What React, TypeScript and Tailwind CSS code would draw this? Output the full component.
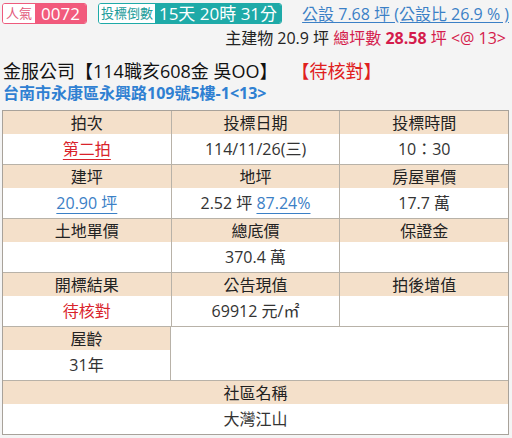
import React from "react";

const font = {
  fontFamily: '"Open Sans", "Noto Sans CJK TC", sans-serif',
};

const Head = ({ children }: { children?: React.ReactNode }) => (
  <div className="h-[23px] bg-[#f4e0ca] flex items-center justify-center text-[16px] text-[#222]">
    {children}
  </div>
);

const Val = ({ children }: { children?: React.ReactNode }) => (
  <div className="h-[30px] bg-white flex items-center justify-center text-[16px] text-[#333]">
    {children}
  </div>
);

const Cell = ({ head, value, last }: { head: string; value?: React.ReactNode; last?: boolean }) => (
  <div className={last ? "flex-1" : "flex-1 border-r border-[#b8b2a8]"}>
    <Head>{head}</Head>
    <Val>{value}</Val>
  </div>
);

export default function App() {
  return (
    <div className="w-[512px] h-[438px] bg-[#f4f4f4] overflow-hidden" style={font}>
      <div className="flex items-center pl-[2px] pr-[3px] pt-[3px] h-[24px]">
        <div className="flex h-[21px] rounded-[3px] overflow-hidden border border-[#ee5a7c] leading-none">
          <span className="bg-white text-[#e2587a] text-[13px] px-[3px] flex items-center">人氣</span>
          <span className="bg-[#f25a7c] text-white text-[17px] px-[6px] flex items-center">0072</span>
        </div>
        <div className="ml-[11px] flex h-[21px] rounded-[3px] overflow-hidden border border-[#1eaaa8] leading-none">
          <span className="bg-white text-[#1b9c9a] text-[13px] px-[2px] flex items-center">投標倒數</span>
          <span className="bg-[#1eaaa8] text-white text-[17px] px-[4px] flex items-center">15天 20時 31分</span>
        </div>
        <a className="ml-auto text-[16px] text-[#3b80c6] underline underline-offset-2">公設 7.68 坪 (公設比 26.9 % )</a>
      </div>
      <div className="flex justify-end pr-[6px] mt-[3px] h-[22px] items-center text-[16px] text-[#222]">
        <span>主建物 20.9 坪&nbsp;</span>
        <span className="text-[#d41c4c]">
          總坪數 <b>28.58</b> 坪 &lt;@ 13&gt;
        </span>
      </div>
      <div className="mt-[10px] pl-[3px] h-[25px] flex items-center text-[18px] text-[#111]">
        <span>金服公司【114職亥608金 吳OO】</span>
        <span className="ml-[14px] text-[#e0201e]">【待核對】</span>
      </div>
      <div className="pl-[3px] h-[18px] flex items-center text-[16px] font-bold text-[#2f80d2]">
        台南市永康區永興路109號5樓-1&lt;13&gt;
      </div>
      <div className="mt-[8px] mx-[2px] w-[507px] border border-[#a8a29a]">
        <div className="flex border-b border-[#b8b2a8]">
          <Cell head="拍次" value={<a className="text-[#d9232b] underline underline-offset-4">第二拍</a>} />
          <Cell head="投標日期" value="114/11/26(三)" />
          <Cell head="投標時間" value="10：30" last />
        </div>
        <div className="flex border-b border-[#b8b2a8]">
          <Cell head="建坪" value={<a className="text-[#3b80c6] underline underline-offset-4">20.90 坪</a>} />
          <Cell
            head="地坪"
            value={
              <span>
                2.52 坪 <a className="text-[#3b80c6] underline underline-offset-4">87.24%</a>
              </span>
            }
          />
          <Cell head="房屋單價" value="17.7 萬" last />
        </div>
        <div className="flex border-b border-[#b8b2a8]">
          <Cell head="土地單價" />
          <Cell head="總底價" value="370.4 萬" />
          <Cell head="保證金" last />
        </div>
        <div className="flex border-b border-[#b8b2a8]">
          <Cell head="開標結果" value={<span className="text-[#d9232b]">待核對</span>} />
          <Cell head="公告現值" value="69912 元/㎡" />
          <Cell head="拍後增值" last />
        </div>
        <div className="flex border-b border-[#b8b2a8]">
          <div className="w-[168px] border-r border-[#b8b2a8]">
            <Head>屋齡</Head>
            <Val>31年</Val>
          </div>
          <div className="flex-1 bg-white" />
        </div>
        <div>
          <Head>社區名稱</Head>
          <Val>大灣江山</Val>
        </div>
      </div>
    </div>
  );
}
